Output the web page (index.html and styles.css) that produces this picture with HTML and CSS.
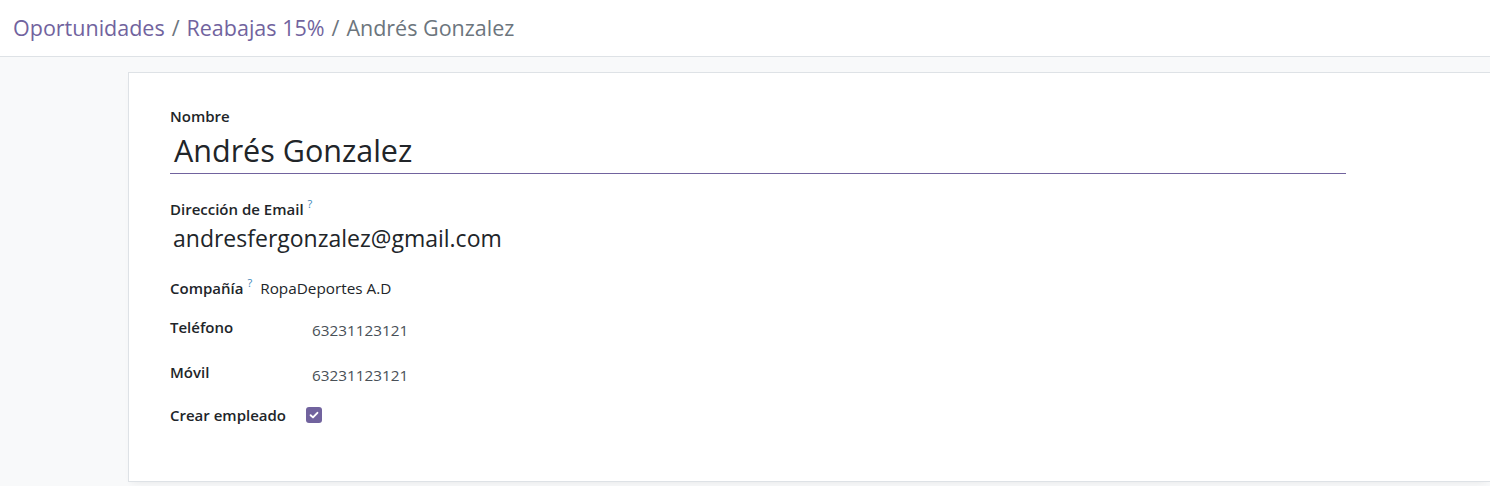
FILE: index.html
```html
<!DOCTYPE html>
<html lang="es">
<head>
<meta charset="utf-8">
<title>Andrés Gonzalez</title>
<link rel="stylesheet" href="styles.css">
</head>
<body>
<header class="topbar">
  <nav class="breadcrumb">
    <a class="crumb-link">Oportunidades</a>
    <span class="sep">/</span>
    <a class="crumb-link">Reabajas 15%</a>
    <span class="sep">/</span>
    <span class="crumb-active">Andrés Gonzalez</span>
  </nav>
</header>
<main class="content">
  <section class="sheet">
    <div class="field-block">
      <label class="lbl">Nombre</label>
      <div class="name-input">Andrés Gonzalez</div>
    </div>
    <div class="field-block email-block">
      <label class="lbl">Dirección de Email<sup class="help">?</sup></label>
      <div class="email">andresfergonzalez@gmail.com</div>
    </div>
    <div class="company-row">
      <label class="lbl">Compañía<sup class="help">?</sup></label>
      <span class="company">RopaDeportes A.D</span>
    </div>
    <div class="grid">
      <label class="lbl">Teléfono</label>
      <span class="val">63231123121</span>
      <label class="lbl">Móvil</label>
      <span class="val">63231123121</span>
      <label class="lbl">Crear empleado</label>
      <span class="check">
        <svg width="16" height="16" viewBox="0 0 16 16"><rect x="0" y="0" width="16" height="16" rx="3" fill="#71639e"/><path d="M4.6 8.2 L7 10.4 L11.4 5.8" fill="none" stroke="#fff" stroke-width="1.9" stroke-linecap="round" stroke-linejoin="round"/></svg>
      </span>
    </div>
  </section>
</main>
</body>
</html>
```
FILE: styles.css
```css
* { box-sizing: border-box; }
html, body { margin: 0; padding: 0; }
body {
  font-family: "Open Sans", "Noto Sans", "DejaVu Sans", sans-serif;
  color: #212529;
  background: #f8f9fa;
  height: 486px;
  overflow: hidden;
}
.topbar {
  height: 57px;
  background: #fff;
  border-bottom: 1px solid #dee2e6;
  display: flex;
  align-items: center;
  padding-left: 13px;
}
.breadcrumb {
  font-size: 21.5px;
  display: flex;
  gap: 7px;
  padding-bottom: 1px;
}
.crumb-link { color: #71639e; }
.sep { color: #6c757d; }
.crumb-active { color: #6c757d; }
.content {
  padding: 15px 0 0 128px;
}
.sheet {
  background: #fff;
  border: 1px solid #dee2e6;
  border-right: none;
  height: 410px;
  padding: 33px 0 0 41px;
  box-shadow: 0 4px 8px -4px rgba(0,0,0,0.08);
}
.lbl {
  font-size: 15px;
  font-weight: 600;
  color: #212529;
  display: block;
  line-height: 21px;
}
.help {
  color: #3d86b8;
  font-size: 11px;
  font-weight: 400;
  margin-left: 4px;
  vertical-align: 7px;
  line-height: 0;
}
.name-input {
  width: 1176px;
  border-bottom: 1px solid #71639e;
  font-size: 30.5px;
  line-height: 46px;
  padding-left: 4px;
  color: #212529;
}
.email-block { margin-top: 25px; }
.email {
  font-size: 23px;
  line-height: 32px;
  padding-left: 3px;
  margin-top: 2px;
  color: #212529;
}
.company-row {
  margin-top: 24px;
  display: flex;
  align-items: baseline;
}
.company-row .lbl { display: inline-block; }
.company {
  font-size: 15.3px;
  margin-left: 8px;
  color: #212529;
}
.grid {
  margin-top: 18px;
  display: grid;
  grid-template-columns: 136px 1fr;
  grid-template-rows: 45px 43px auto;
  align-items: start;
}
.val {
  font-size: 15.3px;
  color: #495057;
  padding: 3px 0 0 6px;
  line-height: 21px;
}
.check {
  display: block;
  padding-top: 2px;
  height: 16px;
}
.check svg { display: block; }
```
